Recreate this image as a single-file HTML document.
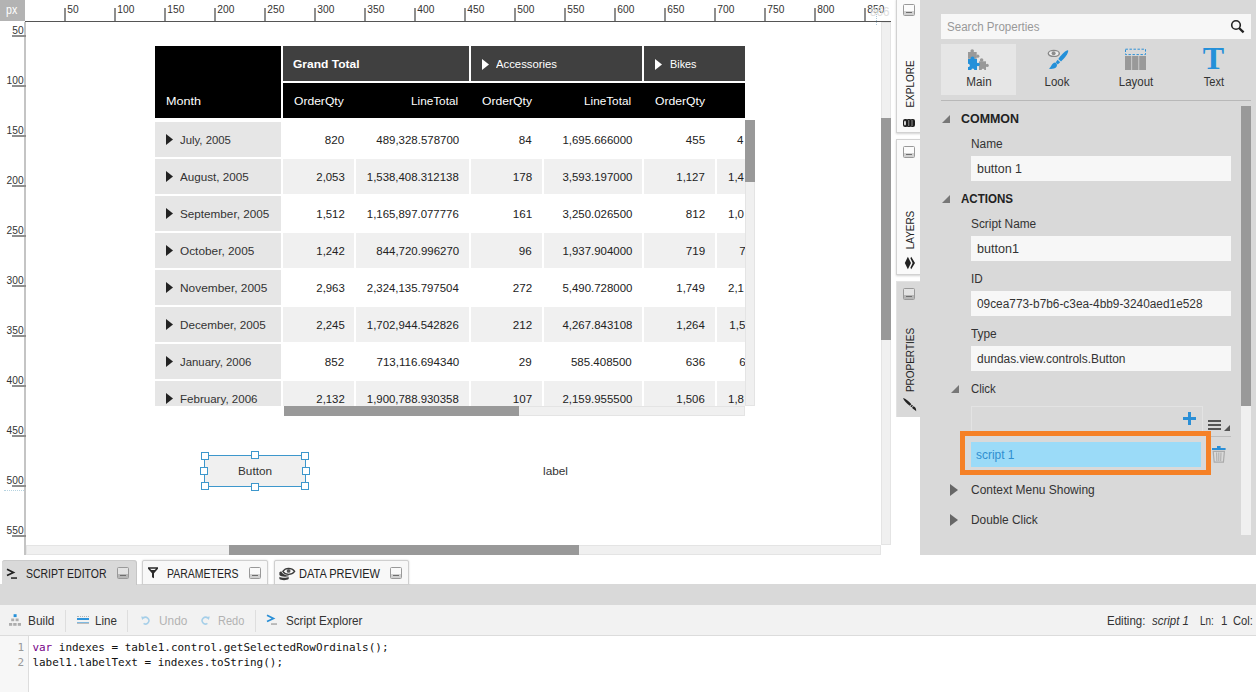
<!DOCTYPE html>
<html lang="en"><head><meta charset="utf-8"><title>Script Editor</title>
<style>
html,body{margin:0;padding:0;}
body{width:1256px;height:692px;overflow:hidden;background:#fff;position:relative;font-family:"Liberation Sans",sans-serif;}
body div,body svg{position:absolute;}
.t{white-space:nowrap;}
</style></head><body>
<div style="left:0px;top:0px;width:25px;height:21px;background:#b3b3b3;"></div>
<div class="t" style="top:1.6px;height:16px;line-height:16px;font-size:12px;color:#fff;left:6.1px;transform:scaleX(0.8828);transform-origin:left center;">px</div>
<div style="left:25px;top:21px;width:866px;height:1px;background:#555;"></div>
<div style="left:24px;top:22px;width:2px;height:533px;background:#c4c4c4;"></div>
<div style="left:64px;top:8px;width:2px;height:13px;background:#8e8e8e;"></div>
<div class="t" style="top:1.8px;height:16px;line-height:16px;font-size:10.2px;color:#333;left:67.3px;">50</div>
<div style="left:114px;top:8px;width:2px;height:13px;background:#8e8e8e;"></div>
<div class="t" style="top:1.8px;height:16px;line-height:16px;font-size:10.2px;color:#333;left:117.3px;">100</div>
<div style="left:164px;top:8px;width:2px;height:13px;background:#8e8e8e;"></div>
<div class="t" style="top:1.8px;height:16px;line-height:16px;font-size:10.2px;color:#333;left:167.3px;">150</div>
<div style="left:214px;top:8px;width:2px;height:13px;background:#8e8e8e;"></div>
<div class="t" style="top:1.8px;height:16px;line-height:16px;font-size:10.2px;color:#333;left:217.3px;">200</div>
<div style="left:264px;top:8px;width:2px;height:13px;background:#8e8e8e;"></div>
<div class="t" style="top:1.8px;height:16px;line-height:16px;font-size:10.2px;color:#333;left:267.3px;">250</div>
<div style="left:314px;top:8px;width:2px;height:13px;background:#8e8e8e;"></div>
<div class="t" style="top:1.8px;height:16px;line-height:16px;font-size:10.2px;color:#333;left:317.3px;">300</div>
<div style="left:364px;top:8px;width:2px;height:13px;background:#8e8e8e;"></div>
<div class="t" style="top:1.8px;height:16px;line-height:16px;font-size:10.2px;color:#333;left:367.3px;">350</div>
<div style="left:414px;top:8px;width:2px;height:13px;background:#8e8e8e;"></div>
<div class="t" style="top:1.8px;height:16px;line-height:16px;font-size:10.2px;color:#333;left:417.3px;">400</div>
<div style="left:464px;top:8px;width:2px;height:13px;background:#8e8e8e;"></div>
<div class="t" style="top:1.8px;height:16px;line-height:16px;font-size:10.2px;color:#333;left:467.3px;">450</div>
<div style="left:514px;top:8px;width:2px;height:13px;background:#8e8e8e;"></div>
<div class="t" style="top:1.8px;height:16px;line-height:16px;font-size:10.2px;color:#333;left:517.3px;">500</div>
<div style="left:564px;top:8px;width:2px;height:13px;background:#8e8e8e;"></div>
<div class="t" style="top:1.8px;height:16px;line-height:16px;font-size:10.2px;color:#333;left:567.3px;">550</div>
<div style="left:614px;top:8px;width:2px;height:13px;background:#8e8e8e;"></div>
<div class="t" style="top:1.8px;height:16px;line-height:16px;font-size:10.2px;color:#333;left:617.3px;">600</div>
<div style="left:664px;top:8px;width:2px;height:13px;background:#8e8e8e;"></div>
<div class="t" style="top:1.8px;height:16px;line-height:16px;font-size:10.2px;color:#333;left:667.3px;">650</div>
<div style="left:714px;top:8px;width:2px;height:13px;background:#8e8e8e;"></div>
<div class="t" style="top:1.8px;height:16px;line-height:16px;font-size:10.2px;color:#333;left:717.3px;">700</div>
<div style="left:764px;top:8px;width:2px;height:13px;background:#8e8e8e;"></div>
<div class="t" style="top:1.8px;height:16px;line-height:16px;font-size:10.2px;color:#333;left:767.3px;">750</div>
<div style="left:814px;top:8px;width:2px;height:13px;background:#8e8e8e;"></div>
<div class="t" style="top:1.8px;height:16px;line-height:16px;font-size:10.2px;color:#333;left:817.3px;">800</div>
<div style="left:864px;top:8px;width:2px;height:13px;background:#8e8e8e;"></div>
<div class="t" style="top:1.8px;height:16px;line-height:16px;font-size:10.2px;color:#333;left:867.3px;">850</div>
<div style="left:12px;top:35px;width:13.5px;height:2px;background:#8e8e8e;"></div>
<div class="t" style="top:22.6px;height:16px;line-height:16px;font-size:10.2px;color:#333;right:1232.4px;text-align:right;">50</div>
<div style="left:12px;top:85px;width:13.5px;height:2px;background:#8e8e8e;"></div>
<div class="t" style="top:72.6px;height:16px;line-height:16px;font-size:10.2px;color:#333;right:1232.4px;text-align:right;">100</div>
<div style="left:12px;top:135px;width:13.5px;height:2px;background:#8e8e8e;"></div>
<div class="t" style="top:122.6px;height:16px;line-height:16px;font-size:10.2px;color:#333;right:1232.4px;text-align:right;">150</div>
<div style="left:12px;top:185px;width:13.5px;height:2px;background:#8e8e8e;"></div>
<div class="t" style="top:172.6px;height:16px;line-height:16px;font-size:10.2px;color:#333;right:1232.4px;text-align:right;">200</div>
<div style="left:12px;top:235px;width:13.5px;height:2px;background:#8e8e8e;"></div>
<div class="t" style="top:222.6px;height:16px;line-height:16px;font-size:10.2px;color:#333;right:1232.4px;text-align:right;">250</div>
<div style="left:12px;top:285px;width:13.5px;height:2px;background:#8e8e8e;"></div>
<div class="t" style="top:272.6px;height:16px;line-height:16px;font-size:10.2px;color:#333;right:1232.4px;text-align:right;">300</div>
<div style="left:12px;top:335px;width:13.5px;height:2px;background:#8e8e8e;"></div>
<div class="t" style="top:322.6px;height:16px;line-height:16px;font-size:10.2px;color:#333;right:1232.4px;text-align:right;">350</div>
<div style="left:12px;top:385px;width:13.5px;height:2px;background:#8e8e8e;"></div>
<div class="t" style="top:372.6px;height:16px;line-height:16px;font-size:10.2px;color:#333;right:1232.4px;text-align:right;">400</div>
<div style="left:12px;top:435px;width:13.5px;height:2px;background:#8e8e8e;"></div>
<div class="t" style="top:422.6px;height:16px;line-height:16px;font-size:10.2px;color:#333;right:1232.4px;text-align:right;">450</div>
<div style="left:12px;top:485px;width:13.5px;height:2px;background:#8e8e8e;"></div>
<div class="t" style="top:472.6px;height:16px;line-height:16px;font-size:10.2px;color:#333;right:1232.4px;text-align:right;">500</div>
<div style="left:12px;top:535px;width:13.5px;height:2px;background:#8e8e8e;"></div>
<div class="t" style="top:522.6px;height:16px;line-height:16px;font-size:10.2px;color:#333;right:1232.4px;text-align:right;">550</div>
<div style="left:4px;top:490px;width:20px;height:0;border-top:1px dotted #b5d3e0;"></div>
<div style="left:876px;top:12px;width:0;height:13px;border-left:1px dotted #a9c6d8;"></div>
<div class="t" style="top:4.4px;height:16px;line-height:16px;font-size:12px;color:#dedede;left:870.3px;transform:scaleX(0.9685);transform-origin:left center;">866</div>
<div style="left:155px;top:46px;width:590px;height:360px;overflow:hidden;">
<div style="left:0px;top:0px;width:126px;height:72px;background:#000;"></div>
<div style="left:128px;top:0px;width:186px;height:35px;background:#404040;"></div>
<div style="left:316px;top:0px;width:171px;height:35px;background:#404040;"></div>
<div style="left:489px;top:0px;width:110px;height:35px;background:#404040;"></div>
<div style="left:128px;top:37px;width:470px;height:35px;background:#000;"></div>
<div style="left:0px;top:76px;width:126px;height:35px;background:#e6e6e6;"></div>
<div style="left:0px;top:113px;width:126px;height:35px;background:#e6e6e6;"></div>
<div style="left:128px;top:113px;width:71px;height:35px;background:#f0f0f0;"></div>
<div style="left:201px;top:113px;width:113px;height:35px;background:#f0f0f0;"></div>
<div style="left:316px;top:113px;width:71px;height:35px;background:#f0f0f0;"></div>
<div style="left:389px;top:113px;width:98px;height:35px;background:#f0f0f0;"></div>
<div style="left:489px;top:113px;width:71px;height:35px;background:#f0f0f0;"></div>
<div style="left:562px;top:113px;width:60px;height:35px;background:#f0f0f0;"></div>
<div style="left:0px;top:150px;width:126px;height:35px;background:#e6e6e6;"></div>
<div style="left:0px;top:187px;width:126px;height:35px;background:#e6e6e6;"></div>
<div style="left:128px;top:187px;width:71px;height:35px;background:#f0f0f0;"></div>
<div style="left:201px;top:187px;width:113px;height:35px;background:#f0f0f0;"></div>
<div style="left:316px;top:187px;width:71px;height:35px;background:#f0f0f0;"></div>
<div style="left:389px;top:187px;width:98px;height:35px;background:#f0f0f0;"></div>
<div style="left:489px;top:187px;width:71px;height:35px;background:#f0f0f0;"></div>
<div style="left:562px;top:187px;width:60px;height:35px;background:#f0f0f0;"></div>
<div style="left:0px;top:224px;width:126px;height:35px;background:#e6e6e6;"></div>
<div style="left:0px;top:261px;width:126px;height:35px;background:#e6e6e6;"></div>
<div style="left:128px;top:261px;width:71px;height:35px;background:#f0f0f0;"></div>
<div style="left:201px;top:261px;width:113px;height:35px;background:#f0f0f0;"></div>
<div style="left:316px;top:261px;width:71px;height:35px;background:#f0f0f0;"></div>
<div style="left:389px;top:261px;width:98px;height:35px;background:#f0f0f0;"></div>
<div style="left:489px;top:261px;width:71px;height:35px;background:#f0f0f0;"></div>
<div style="left:562px;top:261px;width:60px;height:35px;background:#f0f0f0;"></div>
<div style="left:0px;top:298px;width:126px;height:35px;background:#e6e6e6;"></div>
<div style="left:0px;top:335px;width:126px;height:35px;background:#e6e6e6;"></div>
<div style="left:128px;top:335px;width:71px;height:35px;background:#f0f0f0;"></div>
<div style="left:201px;top:335px;width:113px;height:35px;background:#f0f0f0;"></div>
<div style="left:316px;top:335px;width:71px;height:35px;background:#f0f0f0;"></div>
<div style="left:389px;top:335px;width:98px;height:35px;background:#f0f0f0;"></div>
<div style="left:489px;top:335px;width:71px;height:35px;background:#f0f0f0;"></div>
<div style="left:562px;top:335px;width:60px;height:35px;background:#f0f0f0;"></div>
</div>
<div class="t" style="top:92.5px;height:16px;line-height:16px;font-size:11.5px;color:#fff;left:165.5px;transform:scaleX(1.0948);transform-origin:left center;">Month</div>
<div class="t" style="top:55.5px;height:16px;line-height:16px;font-size:11.5px;color:#fff;font-weight:bold;left:293px;transform:scaleX(1.0442);transform-origin:left center;">Grand Total</div>
<div class="t" style="top:55.5px;height:16px;line-height:16px;font-size:11.5px;color:#fff;left:496px;transform:scaleX(0.9839);transform-origin:left center;">Accessories</div>
<div class="t" style="top:55.5px;height:16px;line-height:16px;font-size:11.5px;color:#fff;left:669.5px;transform:scaleX(0.9422);transform-origin:left center;">Bikes</div>
<svg style="left:482px;top:58.5px" width="7" height="11" viewBox="0 0 7 11"><path d="M0 0L7 5.5L0 11Z" fill="#fff"/></svg>
<svg style="left:655px;top:58.5px" width="7" height="11" viewBox="0 0 7 11"><path d="M0 0L7 5.5L0 11Z" fill="#fff"/></svg>
<div class="t" style="top:92.5px;height:16px;line-height:16px;font-size:11.5px;color:#fff;left:294.3px;transform:scaleX(1.0508);transform-origin:left center;">OrderQty</div>
<div class="t" style="top:92.5px;height:16px;line-height:16px;font-size:11.5px;color:#fff;right:797.5px;text-align:right;transform:scaleX(1.0207);transform-origin:right center;">LineTotal</div>
<div class="t" style="top:92.5px;height:16px;line-height:16px;font-size:11.5px;color:#fff;left:482px;transform:scaleX(1.0572);transform-origin:left center;">OrderQty</div>
<div class="t" style="top:92.5px;height:16px;line-height:16px;font-size:11.5px;color:#fff;right:624.5px;text-align:right;transform:scaleX(1.0207);transform-origin:right center;">LineTotal</div>
<div class="t" style="top:92.5px;height:16px;line-height:16px;font-size:11.5px;color:#fff;left:655px;transform:scaleX(1.0572);transform-origin:left center;">OrderQty</div>
<div style="left:155px;top:122px;width:590px;height:284px;overflow:hidden;">
<svg style="left:11px;top:12px" width="7" height="11" viewBox="0 0 7 11"><path d="M0 0L7 5.5L0 11Z" fill="#222"/></svg>
<div class="t" style="top:10.0px;height:16px;line-height:16px;font-size:11.5px;color:#333;left:25.2px;transform:scaleX(0.9869);transform-origin:left center;">July, 2005</div>
<div class="t" style="top:10.0px;height:16px;line-height:16px;font-size:11.5px;color:#222;right:400.6px;text-align:right;transform:scaleX(1.0116);transform-origin:right center;">820</div>
<div class="t" style="top:10.0px;height:16px;line-height:16px;font-size:11.5px;color:#222;right:286px;text-align:right;transform:scaleX(0.9964);transform-origin:right center;">489,328.578700</div>
<div class="t" style="top:10.0px;height:16px;line-height:16px;font-size:11.5px;color:#222;right:213px;text-align:right;transform:scaleX(1.0112);transform-origin:right center;">84</div>
<div class="t" style="top:10.0px;height:16px;line-height:16px;font-size:11.5px;color:#222;right:113px;text-align:right;transform:scaleX(0.9935);transform-origin:right center;">1,695.666000</div>
<div class="t" style="top:10.0px;height:16px;line-height:16px;font-size:11.5px;color:#222;right:39.8px;text-align:right;transform:scaleX(1.0116);transform-origin:right center;">455</div>
<div class="t" style="top:10.0px;height:16px;line-height:16px;font-size:11.5px;color:#222;left:582px;">4</div>
<svg style="left:11px;top:49px" width="7" height="11" viewBox="0 0 7 11"><path d="M0 0L7 5.5L0 11Z" fill="#222"/></svg>
<div class="t" style="top:47.0px;height:16px;line-height:16px;font-size:11.5px;color:#333;left:25.2px;transform:scaleX(1.015);transform-origin:left center;">August, 2005</div>
<div class="t" style="top:47.0px;height:16px;line-height:16px;font-size:11.5px;color:#222;right:400.6px;text-align:right;transform:scaleX(0.9895);transform-origin:right center;">2,053</div>
<div class="t" style="top:47.0px;height:16px;line-height:16px;font-size:11.5px;color:#222;right:286px;text-align:right;transform:scaleX(0.9911);transform-origin:right center;">1,538,408.312138</div>
<div class="t" style="top:47.0px;height:16px;line-height:16px;font-size:11.5px;color:#222;right:213px;text-align:right;transform:scaleX(1.0116);transform-origin:right center;">178</div>
<div class="t" style="top:47.0px;height:16px;line-height:16px;font-size:11.5px;color:#222;right:113px;text-align:right;transform:scaleX(0.9935);transform-origin:right center;">3,593.197000</div>
<div class="t" style="top:47.0px;height:16px;line-height:16px;font-size:11.5px;color:#222;right:39.8px;text-align:right;transform:scaleX(0.9895);transform-origin:right center;">1,127</div>
<div class="t" style="top:47.0px;height:16px;line-height:16px;font-size:11.5px;color:#222;left:573px;">1,4</div>
<svg style="left:11px;top:86px" width="7" height="11" viewBox="0 0 7 11"><path d="M0 0L7 5.5L0 11Z" fill="#222"/></svg>
<div class="t" style="top:84.0px;height:16px;line-height:16px;font-size:11.5px;color:#333;left:25.2px;transform:scaleX(1.0183);transform-origin:left center;">September, 2005</div>
<div class="t" style="top:84.0px;height:16px;line-height:16px;font-size:11.5px;color:#222;right:400.6px;text-align:right;transform:scaleX(0.9895);transform-origin:right center;">1,512</div>
<div class="t" style="top:84.0px;height:16px;line-height:16px;font-size:11.5px;color:#222;right:286px;text-align:right;transform:scaleX(0.9911);transform-origin:right center;">1,165,897.077776</div>
<div class="t" style="top:84.0px;height:16px;line-height:16px;font-size:11.5px;color:#222;right:213px;text-align:right;transform:scaleX(1.0116);transform-origin:right center;">161</div>
<div class="t" style="top:84.0px;height:16px;line-height:16px;font-size:11.5px;color:#222;right:113px;text-align:right;transform:scaleX(0.9935);transform-origin:right center;">3,250.026500</div>
<div class="t" style="top:84.0px;height:16px;line-height:16px;font-size:11.5px;color:#222;right:39.8px;text-align:right;transform:scaleX(1.0116);transform-origin:right center;">812</div>
<div class="t" style="top:84.0px;height:16px;line-height:16px;font-size:11.5px;color:#222;left:573px;">1,0</div>
<svg style="left:11px;top:123px" width="7" height="11" viewBox="0 0 7 11"><path d="M0 0L7 5.5L0 11Z" fill="#222"/></svg>
<div class="t" style="top:121.0px;height:16px;line-height:16px;font-size:11.5px;color:#333;left:25.2px;transform:scaleX(1.0284);transform-origin:left center;">October, 2005</div>
<div class="t" style="top:121.0px;height:16px;line-height:16px;font-size:11.5px;color:#222;right:400.6px;text-align:right;transform:scaleX(0.9895);transform-origin:right center;">1,242</div>
<div class="t" style="top:121.0px;height:16px;line-height:16px;font-size:11.5px;color:#222;right:286px;text-align:right;transform:scaleX(0.9964);transform-origin:right center;">844,720.996270</div>
<div class="t" style="top:121.0px;height:16px;line-height:16px;font-size:11.5px;color:#222;right:213px;text-align:right;transform:scaleX(1.0112);transform-origin:right center;">96</div>
<div class="t" style="top:121.0px;height:16px;line-height:16px;font-size:11.5px;color:#222;right:113px;text-align:right;transform:scaleX(0.9935);transform-origin:right center;">1,937.904000</div>
<div class="t" style="top:121.0px;height:16px;line-height:16px;font-size:11.5px;color:#222;right:39.8px;text-align:right;transform:scaleX(1.0116);transform-origin:right center;">719</div>
<div class="t" style="top:121.0px;height:16px;line-height:16px;font-size:11.5px;color:#222;left:584.3px;">7</div>
<svg style="left:11px;top:160px" width="7" height="11" viewBox="0 0 7 11"><path d="M0 0L7 5.5L0 11Z" fill="#222"/></svg>
<div class="t" style="top:158.0px;height:16px;line-height:16px;font-size:11.5px;color:#333;left:25.2px;transform:scaleX(1.0345);transform-origin:left center;">November, 2005</div>
<div class="t" style="top:158.0px;height:16px;line-height:16px;font-size:11.5px;color:#222;right:400.6px;text-align:right;transform:scaleX(0.9895);transform-origin:right center;">2,963</div>
<div class="t" style="top:158.0px;height:16px;line-height:16px;font-size:11.5px;color:#222;right:286px;text-align:right;transform:scaleX(0.9911);transform-origin:right center;">2,324,135.797504</div>
<div class="t" style="top:158.0px;height:16px;line-height:16px;font-size:11.5px;color:#222;right:213px;text-align:right;transform:scaleX(1.0116);transform-origin:right center;">272</div>
<div class="t" style="top:158.0px;height:16px;line-height:16px;font-size:11.5px;color:#222;right:113px;text-align:right;transform:scaleX(0.9935);transform-origin:right center;">5,490.728000</div>
<div class="t" style="top:158.0px;height:16px;line-height:16px;font-size:11.5px;color:#222;right:39.8px;text-align:right;transform:scaleX(0.9895);transform-origin:right center;">1,749</div>
<div class="t" style="top:158.0px;height:16px;line-height:16px;font-size:11.5px;color:#222;left:573px;">2,1</div>
<svg style="left:11px;top:197px" width="7" height="11" viewBox="0 0 7 11"><path d="M0 0L7 5.5L0 11Z" fill="#222"/></svg>
<div class="t" style="top:195.0px;height:16px;line-height:16px;font-size:11.5px;color:#333;left:25.2px;transform:scaleX(1.0167);transform-origin:left center;">December, 2005</div>
<div class="t" style="top:195.0px;height:16px;line-height:16px;font-size:11.5px;color:#222;right:400.6px;text-align:right;transform:scaleX(0.9895);transform-origin:right center;">2,245</div>
<div class="t" style="top:195.0px;height:16px;line-height:16px;font-size:11.5px;color:#222;right:286px;text-align:right;transform:scaleX(0.9911);transform-origin:right center;">1,702,944.542826</div>
<div class="t" style="top:195.0px;height:16px;line-height:16px;font-size:11.5px;color:#222;right:213px;text-align:right;transform:scaleX(1.0116);transform-origin:right center;">212</div>
<div class="t" style="top:195.0px;height:16px;line-height:16px;font-size:11.5px;color:#222;right:113px;text-align:right;transform:scaleX(0.9935);transform-origin:right center;">4,267.843108</div>
<div class="t" style="top:195.0px;height:16px;line-height:16px;font-size:11.5px;color:#222;right:39.8px;text-align:right;transform:scaleX(0.9895);transform-origin:right center;">1,264</div>
<div class="t" style="top:195.0px;height:16px;line-height:16px;font-size:11.5px;color:#222;left:574.3px;">1,5</div>
<svg style="left:11px;top:234px" width="7" height="11" viewBox="0 0 7 11"><path d="M0 0L7 5.5L0 11Z" fill="#222"/></svg>
<div class="t" style="top:232.0px;height:16px;line-height:16px;font-size:11.5px;color:#333;left:25.2px;transform:scaleX(0.991);transform-origin:left center;">January, 2006</div>
<div class="t" style="top:232.0px;height:16px;line-height:16px;font-size:11.5px;color:#222;right:400.6px;text-align:right;transform:scaleX(1.0116);transform-origin:right center;">852</div>
<div class="t" style="top:232.0px;height:16px;line-height:16px;font-size:11.5px;color:#222;right:286px;text-align:right;transform:scaleX(1.0066);transform-origin:right center;">713,116.694340</div>
<div class="t" style="top:232.0px;height:16px;line-height:16px;font-size:11.5px;color:#222;right:213px;text-align:right;transform:scaleX(1.0112);transform-origin:right center;">29</div>
<div class="t" style="top:232.0px;height:16px;line-height:16px;font-size:11.5px;color:#222;right:113px;text-align:right;transform:scaleX(1.0011);transform-origin:right center;">585.408500</div>
<div class="t" style="top:232.0px;height:16px;line-height:16px;font-size:11.5px;color:#222;right:39.8px;text-align:right;transform:scaleX(1.0116);transform-origin:right center;">636</div>
<div class="t" style="top:232.0px;height:16px;line-height:16px;font-size:11.5px;color:#222;left:584.3px;">6</div>
<svg style="left:11px;top:271px" width="7" height="11" viewBox="0 0 7 11"><path d="M0 0L7 5.5L0 11Z" fill="#222"/></svg>
<div class="t" style="top:269.0px;height:16px;line-height:16px;font-size:11.5px;color:#333;left:25.2px;transform:scaleX(1.0047);transform-origin:left center;">February, 2006</div>
<div class="t" style="top:269.0px;height:16px;line-height:16px;font-size:11.5px;color:#222;right:400.6px;text-align:right;transform:scaleX(0.9895);transform-origin:right center;">2,132</div>
<div class="t" style="top:269.0px;height:16px;line-height:16px;font-size:11.5px;color:#222;right:286px;text-align:right;transform:scaleX(0.9911);transform-origin:right center;">1,900,788.930358</div>
<div class="t" style="top:269.0px;height:16px;line-height:16px;font-size:11.5px;color:#222;right:213px;text-align:right;transform:scaleX(1.0116);transform-origin:right center;">107</div>
<div class="t" style="top:269.0px;height:16px;line-height:16px;font-size:11.5px;color:#222;right:113px;text-align:right;transform:scaleX(0.9935);transform-origin:right center;">2,159.955500</div>
<div class="t" style="top:269.0px;height:16px;line-height:16px;font-size:11.5px;color:#222;right:39.8px;text-align:right;transform:scaleX(0.9895);transform-origin:right center;">1,506</div>
<div class="t" style="top:269.0px;height:16px;line-height:16px;font-size:11.5px;color:#222;left:573px;">1,8</div>
</div>
<div style="left:284px;top:406px;width:461px;height:10px;background:#f0f0f0;box-shadow:inset 0 0 0 1px #e4e4e4;"></div>
<div style="left:284px;top:406px;width:235px;height:10px;background:#999;"></div>
<div style="left:745px;top:120px;width:10px;height:286px;background:#f0f0f0;box-shadow:inset 0 0 0 1px #e4e4e4;"></div>
<div style="left:745px;top:120px;width:10px;height:62px;background:#999;"></div>
<div style="left:204px;top:455px;width:102px;height:32px;background:#f0f0f0;box-sizing:border-box;border:1px solid #3d97cc;"></div>
<div style="left:201px;top:452px;width:8px;height:8px;background:#fff;box-sizing:border-box;border:1px solid #3d97cc;"></div>
<div style="left:251px;top:451px;width:8px;height:8px;background:#fff;box-sizing:border-box;border:1px solid #3d97cc;"></div>
<div style="left:301px;top:452px;width:8px;height:8px;background:#fff;box-sizing:border-box;border:1px solid #3d97cc;"></div>
<div style="left:200px;top:467px;width:8px;height:8px;background:#fff;box-sizing:border-box;border:1px solid #3d97cc;"></div>
<div style="left:302px;top:467px;width:8px;height:8px;background:#fff;box-sizing:border-box;border:1px solid #3d97cc;"></div>
<div style="left:201px;top:482px;width:8px;height:8px;background:#fff;box-sizing:border-box;border:1px solid #3d97cc;"></div>
<div style="left:251px;top:483px;width:8px;height:8px;background:#fff;box-sizing:border-box;border:1px solid #3d97cc;"></div>
<div style="left:301px;top:482px;width:8px;height:8px;background:#fff;box-sizing:border-box;border:1px solid #3d97cc;"></div>
<div class="t" style="top:463.0px;height:16px;line-height:16px;font-size:11.5px;color:#333;left:105px;width:300px;text-align:center;transform:scaleX(1.0226);transform-origin:center center;"><span>Button</span></div>
<div class="t" style="top:462.5px;height:16px;line-height:16px;font-size:11.5px;color:#333;left:543px;transform:scaleX(1.0283);transform-origin:left center;">label</div>
<div style="left:881px;top:22px;width:10px;height:523px;background:#f0f0f0;box-shadow:inset 0 0 0 1px #e4e4e4;"></div>
<div style="left:881px;top:118px;width:10px;height:222px;background:#999;"></div>
<div style="left:26px;top:545px;width:855px;height:10px;background:#f0f0f0;box-shadow:inset 0 0 0 1px #e4e4e4;"></div>
<div style="left:229px;top:545px;width:350px;height:10px;background:#999;"></div>
<div style="left:896px;top:-1px;width:25px;height:134px;background:#fafafa;box-sizing:border-box;border:1px solid #d2d2d2;box-shadow:0 1px 2px rgba(0,0,0,.18);"></div>
<div style="left:903px;top:4px;width:10px;height:10px;border:1px solid #999;border-radius:1.5px;background:linear-gradient(rgba(255,255,255,.25) 0,rgba(255,255,255,.25) 60%,rgba(0,0,0,.16) 60%,rgba(0,0,0,.16) 100%);"><div style="left:2px;top:7px;width:6px;height:1px;background:#6e6e6e;"></div></div>
<div class="t" style="left:809.5px;top:75.80000000000001px;width:200px;height:16px;line-height:16px;text-align:center;font-size:11.5px;color:#222;transform:rotate(-90deg) scaleX(0.8688);"><span>EXPLORE</span></div>
<div style="left:896px;top:139px;width:25px;height:136px;background:#fafafa;box-sizing:border-box;border:1px solid #d2d2d2;box-shadow:0 1px 2px rgba(0,0,0,.18);"></div>
<div style="left:903px;top:146px;width:10px;height:10px;border:1px solid #999;border-radius:1.5px;background:linear-gradient(rgba(255,255,255,.25) 0,rgba(255,255,255,.25) 60%,rgba(0,0,0,.16) 60%,rgba(0,0,0,.16) 100%);"><div style="left:2px;top:7px;width:6px;height:1px;background:#6e6e6e;"></div></div>
<div class="t" style="left:809.5px;top:222.0px;width:200px;height:16px;line-height:16px;text-align:center;font-size:11.5px;color:#222;transform:rotate(-90deg) scaleX(0.8623);"><span>LAYERS</span></div>
<div style="left:896px;top:281px;width:25px;height:135.5px;background:#d9d9d9;box-shadow:inset 1px 1px 0 rgba(255,255,255,.25);"></div>
<div style="left:903px;top:288px;width:10px;height:10px;border:1px solid #999;border-radius:1.5px;background:linear-gradient(rgba(255,255,255,.25) 0,rgba(255,255,255,.25) 60%,rgba(0,0,0,.16) 60%,rgba(0,0,0,.16) 100%);"><div style="left:2px;top:7px;width:6px;height:1px;background:#6e6e6e;"></div></div>
<div class="t" style="left:809.5px;top:351.70000000000005px;width:200px;height:16px;line-height:16px;text-align:center;font-size:11.5px;color:#222;transform:rotate(-90deg) scaleX(0.8685);"><span>PROPERTIES</span></div>
<svg style="left:903px;top:119px" width="12" height="8" viewBox="0 0 12 8"><g fill="#1e1e1e"><rect x="0" y="0" width="4.4" height="8" rx="2"/><rect x="3.8" y="0" width="4.4" height="8" rx="2"/><rect x="7.6" y="0" width="4.4" height="8" rx="2"/><rect x="2" y="0.4" width="8" height="7.2"/></g><ellipse cx="2" cy="4" rx="0.9" ry="2.6" fill="#fafafa"/><rect x="5.4" y="1" width="0.8" height="6" fill="#aaa"/><rect x="8.6" y="1" width="0.8" height="6" fill="#aaa"/></svg>
<svg style="left:904px;top:256px" width="12" height="14" viewBox="0 0 12 14"><path d="M3.9 0.8L7 7L3.9 13.2L0.8 7Z" fill="#222"/><path d="M7.2 0.8L11 7L7.2 13.2L6.4 11.8L8.6 7L6.4 2.2Z" fill="#222"/></svg>
<svg style="left:902px;top:397px" width="15" height="15" viewBox="0 0 15 15"><path d="M1 1C3.6 1.6 6.8 4.2 9.4 7.2L7.8 8.8C4.8 6.4 1.8 3.6 1 1Z M8.4 9.3L9.9 7.8L11 8.8L9.5 10.3Z M10 10.7L11.5 9.2C13.4 9.6 14.3 12 14.2 14.2C12.8 12.6 11.2 12.4 10 10.7Z" fill="#222"/></svg>
<div style="left:920px;top:0px;width:336px;height:555px;background:#d9d9d9;"></div>
<div style="left:941px;top:14px;width:310px;height:25px;background:#f7f7f7;"></div>
<div class="t" style="top:18.5px;height:16px;line-height:16px;font-size:12px;color:#999;left:947px;transform:scaleX(0.9631);transform-origin:left center;">Search Properties</div>
<svg style="left:1229px;top:18px" width="18" height="18" viewBox="0 0 18 18"><circle cx="7" cy="7" r="4.3" fill="none" stroke="#222" stroke-width="1.6"/><path d="M10 10L14.6 14.4" stroke="#222" stroke-width="2.3"/></svg>
<div style="left:941px;top:44px;width:75px;height:51px;background:#e6e6e6;"></div>
<div class="t" style="top:73.5px;height:16px;line-height:16px;font-size:12px;color:#333;left:828.5px;width:300px;text-align:center;transform:scaleX(0.9725);transform-origin:center center;"><span>Main</span></div>
<div class="t" style="top:73.5px;height:16px;line-height:16px;font-size:12px;color:#333;left:907px;width:300px;text-align:center;transform:scaleX(0.9527);transform-origin:center center;"><span>Look</span></div>
<div class="t" style="top:73.5px;height:16px;line-height:16px;font-size:12px;color:#333;left:985.5px;width:300px;text-align:center;transform:scaleX(0.9547);transform-origin:center center;"><span>Layout</span></div>
<div class="t" style="top:73.5px;height:16px;line-height:16px;font-size:12px;color:#333;left:1063.8px;width:300px;text-align:center;transform:scaleX(0.9266);transform-origin:center center;"><span>Text</span></div>
<div style="left:941px;top:100px;width:310px;height:1px;background:#b8b8b8;"></div>
<svg style="left:967px;top:48px" width="23" height="23" viewBox="0 0 23 23">
<g fill="#999"><rect x="1" y="4" width="8.7" height="6.8"/><circle cx="5.2" cy="3" r="1.8"/><circle cx="10.8" cy="8.2" r="1.6"/>
<rect x="12" y="13.3" width="7" height="8.7"/><circle cx="14.6" cy="12" r="1.8"/><circle cx="20.2" cy="17.4" r="1.6"/></g>
<g fill="#2490d9"><rect x="1" y="11" width="9" height="11"/><circle cx="5.5" cy="10.6" r="2"/><circle cx="11" cy="16.5" r="1.8"/></g>
<circle cx="1.2" cy="17.4" r="1.6" fill="#e6e6e6"/><circle cx="5.8" cy="22" r="1.5" fill="#e6e6e6"/><circle cx="16" cy="22.2" r="1.4" fill="#e6e6e6"/>
</svg>
<svg style="left:1046px;top:48px" width="24" height="23" viewBox="0 0 24 23">
<ellipse cx="7.8" cy="5.4" rx="5.5" ry="3" fill="#eee" stroke="#888" stroke-width="1.4"/><circle cx="7.6" cy="5.2" r="2" fill="#8e8e8e"/>
<path d="M22 2.3C23 3.4 20.6 8.6 15 13.4L12.3 11C15.6 6 20.6 1.6 22 2.3Z" fill="#2490d9"/>
<path d="M11.6 11.8L14.2 14.2L11.6 16.4L9.8 14.2Z" fill="#2490d9"/>
<path d="M9.3 14.6C11 15.4 11.6 17.4 10.4 19C8.6 21 5.6 21 2.8 20.8C5.4 19.6 5.4 15 9.3 14.6Z" fill="#2490d9"/></svg>
<svg style="left:1124px;top:48px" width="23" height="23" viewBox="0 0 23 23">
<rect x="1.5" y="1.2" width="20" height="5.4" fill="none" stroke="#2b8fd6" stroke-width="1" stroke-dasharray="2.4 1.6"/>
<rect x="1" y="8" width="6.3" height="14" fill="#999"/><rect x="8.1" y="8" width="6.3" height="14" fill="#999"/><rect x="15.2" y="8" width="6.8" height="14" fill="#999"/></svg>
<div class="t" style="top:41.3px;height:34px;line-height:34px;font-size:32px;color:#2490d9;font-weight:bold;font-family:'Liberation Serif',serif;left:1063.5px;width:300px;text-align:center;"><span>T</span></div>
<div style="left:1241px;top:106px;width:10px;height:429px;background:#f0f0f0;"></div>
<div style="left:1241px;top:106px;width:10px;height:300px;background:#999;"></div>
<svg style="left:941.5px;top:115px" width="8" height="8" viewBox="0 0 8 8"><path d="M8 0V8H0Z" fill="#777"/></svg>
<div class="t" style="top:110.5px;height:16px;line-height:16px;font-size:12px;color:#222;font-weight:bold;left:961px;transform:scaleX(1.0357);transform-origin:left center;">COMMON</div>
<div class="t" style="top:135.5px;height:16px;line-height:16px;font-size:12px;color:#333;left:970.8px;transform:scaleX(0.9901);transform-origin:left center;">Name</div>
<div style="left:971px;top:156px;width:260px;height:25px;background:#f7f7f7;"></div>
<div class="t" style="top:161.0px;height:16px;line-height:16px;font-size:12px;color:#333;left:977px;transform:scaleX(1.0375);transform-origin:left center;">button 1</div>
<svg style="left:941.5px;top:195px" width="8" height="8" viewBox="0 0 8 8"><path d="M8 0V8H0Z" fill="#777"/></svg>
<div class="t" style="top:190.5px;height:16px;line-height:16px;font-size:12px;color:#222;font-weight:bold;left:961px;transform:scaleX(0.963);transform-origin:left center;">ACTIONS</div>
<div class="t" style="top:215.5px;height:16px;line-height:16px;font-size:12px;color:#333;left:970.8px;transform:scaleX(0.9874);transform-origin:left center;">Script Name</div>
<div style="left:971px;top:236px;width:260px;height:25px;background:#f7f7f7;"></div>
<div class="t" style="top:241.0px;height:16px;line-height:16px;font-size:12px;color:#333;left:977px;transform:scaleX(1.0488);transform-origin:left center;">button1</div>
<div class="t" style="top:270.5px;height:16px;line-height:16px;font-size:12px;color:#333;left:970.8px;transform:scaleX(0.975);transform-origin:left center;">ID</div>
<div style="left:971px;top:291px;width:260px;height:25px;background:#f7f7f7;"></div>
<div class="t" style="top:296.0px;height:16px;line-height:16px;font-size:12px;color:#333;left:977px;transform:scaleX(0.9882);transform-origin:left center;">09cea773-b7b6-c3ea-4bb9-3240aed1e528</div>
<div class="t" style="top:325.5px;height:16px;line-height:16px;font-size:12px;color:#333;left:970.8px;transform:scaleX(0.9879);transform-origin:left center;">Type</div>
<div style="left:971px;top:346px;width:260px;height:25px;background:#f7f7f7;"></div>
<div class="t" style="top:351.0px;height:16px;line-height:16px;font-size:12px;color:#333;left:977px;transform:scaleX(0.9937);transform-origin:left center;">dundas.view.controls.Button</div>
<svg style="left:951px;top:385px" width="8" height="8" viewBox="0 0 8 8"><path d="M8 0V8H0Z" fill="#777"/></svg>
<div class="t" style="top:380.5px;height:16px;line-height:16px;font-size:12px;color:#333;left:970.8px;transform:scaleX(0.95);transform-origin:left center;">Click</div>
<div style="left:971px;top:406px;width:232px;height:27px;box-shadow:inset 0 0 0 1px #e3e3e3;"></div>
<div style="left:1183px;top:417px;width:13px;height:3px;background:#2b8fd6;"></div>
<div style="left:1188px;top:412px;width:3px;height:13px;background:#2b8fd6;"></div>
<div style="left:1208px;top:420px;width:13px;height:2px;background:#555;"></div>
<div style="left:1208px;top:424px;width:13px;height:2px;background:#555;"></div>
<div style="left:1208px;top:428px;width:13px;height:2px;background:#555;"></div>
<svg style="left:1224px;top:425px" width="6" height="6" viewBox="0 0 6 6"><path d="M6 0V6H0Z" fill="#555"/></svg>
<div style="left:1211px;top:436px;width:20px;height:1px;background:#bdbdbd;"></div>
<div style="left:971px;top:442px;width:230px;height:25px;background:#9bdbf8;"></div>
<div class="t" style="top:446.5px;height:16px;line-height:16px;font-size:12px;color:#2f8fd0;left:976px;transform:scaleX(0.9952);transform-origin:left center;">script 1</div>
<div style="left:960px;top:431px;width:251px;height:44px;box-sizing:border-box;border:5px solid #f58127;"></div>
<svg style="left:1211px;top:445px" width="16" height="18" viewBox="0 0 16 18">
<rect x="1" y="3" width="13.6" height="2" fill="#2b8fd6"/><rect x="6" y="1" width="3.6" height="2" fill="#2b8fd6"/>
<path d="M2.2 6.4H13.4L12.4 17.2H3.2Z" fill="none" stroke="#aaa" stroke-width="1.2"/>
<path d="M5.6 7.5L5.9 16M7.8 7.5V16M10 7.5L9.7 16" stroke="#aaa" stroke-width="1"/></svg>
<svg style="left:950px;top:484px" width="8" height="12" viewBox="0 0 8 12"><path d="M0 0L8 6L0 12Z" fill="#666"/></svg>
<div class="t" style="top:481.5px;height:16px;line-height:16px;font-size:12px;color:#333;left:970.8px;transform:scaleX(0.997);transform-origin:left center;">Context Menu Showing</div>
<svg style="left:950px;top:514px" width="8" height="12" viewBox="0 0 8 12"><path d="M0 0L8 6L0 12Z" fill="#666"/></svg>
<div class="t" style="top:511.5px;height:16px;line-height:16px;font-size:12px;color:#333;left:970.8px;transform:scaleX(0.9902);transform-origin:left center;">Double Click</div>
<div style="left:0px;top:584px;width:1256px;height:21px;background:#d9d9d9;"></div>
<div style="left:0px;top:605px;width:1256px;height:30px;background:#f2f2f2;"></div>
<div style="left:0px;top:635px;width:1256px;height:1px;background:#dcdcdc;"></div>
<div style="left:2px;top:560px;width:134px;height:25px;background:#d9d9d9;border-radius:3px 3px 0 0;box-shadow:1px 0 0 #c6c6c6, inset 0 1px 0 #cbcbcb;"></div>
<div style="left:142px;top:560px;width:126px;height:25px;background:#f8f8f8;box-sizing:border-box;border:1px solid #cfcfcf;box-shadow:0 0 2px rgba(0,0,0,.18);border-radius:2px 2px 0 0;"></div>
<div style="left:274px;top:560px;width:135px;height:25px;background:#f8f8f8;box-sizing:border-box;border:1px solid #cfcfcf;box-shadow:0 0 2px rgba(0,0,0,.18);border-radius:2px 2px 0 0;"></div>
<div style="left:136px;top:585px;width:1120px;height:3px;background:#d9d9d9;"></div>
<div style="left:117px;top:567px;width:10px;height:10px;border:1px solid #999;border-radius:1.5px;background:linear-gradient(rgba(255,255,255,.25) 0,rgba(255,255,255,.25) 60%,rgba(0,0,0,.16) 60%,rgba(0,0,0,.16) 100%);"><div style="left:2px;top:7px;width:6px;height:1px;background:#6e6e6e;"></div></div>
<div style="left:249px;top:567px;width:10px;height:10px;border:1px solid #999;border-radius:1.5px;background:linear-gradient(rgba(255,255,255,.25) 0,rgba(255,255,255,.25) 60%,rgba(0,0,0,.16) 60%,rgba(0,0,0,.16) 100%);"><div style="left:2px;top:7px;width:6px;height:1px;background:#6e6e6e;"></div></div>
<div style="left:390px;top:567px;width:10px;height:10px;border:1px solid #999;border-radius:1.5px;background:linear-gradient(rgba(255,255,255,.25) 0,rgba(255,255,255,.25) 60%,rgba(0,0,0,.16) 60%,rgba(0,0,0,.16) 100%);"><div style="left:2px;top:7px;width:6px;height:1px;background:#6e6e6e;"></div></div>
<div class="t" style="top:565.5px;height:16px;line-height:16px;font-size:12px;color:#222;left:26px;transform:scaleX(0.8726);transform-origin:left center;">SCRIPT EDITOR</div>
<div class="t" style="top:565.5px;height:16px;line-height:16px;font-size:12px;color:#222;left:167px;transform:scaleX(0.8741);transform-origin:left center;">PARAMETERS</div>
<div class="t" style="top:565.5px;height:16px;line-height:16px;font-size:12px;color:#222;left:299px;transform:scaleX(0.9178);transform-origin:left center;">DATA PREVIEW</div>
<svg style="left:6px;top:568px" width="12" height="12" viewBox="0 0 12 12"><path d="M1 1.2L7.5 4.4L1 7.6" fill="none" stroke="#222" stroke-width="1.7"/><rect x="5" y="9.3" width="6" height="1.5" fill="#222"/></svg>
<svg style="left:148px;top:567px" width="10" height="12" viewBox="0 0 10 12"><path d="M0 0.3H10V1.8L6 6.2V11.2L4 10.2V6.2L0 1.8Z" fill="#2a2a2a"/><path d="M2 1.7H8L6.6 3H3.4Z" fill="#f8f8f8"/></svg>
<svg style="left:278.5px;top:566.5px" width="17" height="14" viewBox="0 0 17 14">
<path d="M3.8 4.4C6.5 0.3 12.7 0.3 15.7 4.4C12.7 8.3 6.5 8.3 3.8 4.4Z" fill="#f8f8f8" stroke="#3a3a3a" stroke-width="1.25"/><circle cx="9.6" cy="3.9" r="1.9" fill="#555"/>
<path d="M0.4 5.2L2.2 4.3C3.2 7 6 8.4 9.7 8.6V9.3C6 10.2 1.4 9.6 0.4 8Z" fill="#3a3a3a"/>
<path d="M0.4 9.7C2 11 8 11.1 9.7 10V12C8 13.5 2 13.5 0.4 12Z" fill="#3a3a3a"/></svg>
<svg style="left:9px;top:614px" width="12" height="12" viewBox="0 0 12 12"><rect x="4.6" y="0.2" width="3" height="2.9" fill="#2490d9"/>
<g fill="#adadad"><rect x="2.2" y="4.5" width="3" height="2.7"/><rect x="6.6" y="4.5" width="3" height="2.7"/><rect x="0" y="9" width="3.2" height="2.8"/><rect x="4.2" y="9" width="3.4" height="2.8"/><rect x="8.8" y="9" width="3.2" height="2.8"/></g></svg>
<div class="t" style="top:613.0px;height:16px;line-height:16px;font-size:12px;color:#333;left:27.8px;transform:scaleX(0.9892);transform-origin:left center;">Build</div>
<div style="left:65px;top:610px;width:1px;height:22px;background:#dedede;"></div>
<div style="left:77px;top:616px;width:12px;height:0;border-top:1px dotted #b5b5b5;"></div>
<div style="left:77px;top:618px;width:12px;height:2px;background:#2f94da;"></div>
<div style="left:77px;top:621.5px;width:12px;height:1.2px;background:#7fb9e0;"></div>
<div style="left:77px;top:623px;width:12px;height:1px;background:#bdbdbd;"></div>
<div class="t" style="top:613.0px;height:16px;line-height:16px;font-size:12px;color:#333;left:95.3px;transform:scaleX(0.9653);transform-origin:left center;">Line</div>
<div style="left:127px;top:610px;width:1px;height:22px;background:#dedede;"></div>
<svg style="left:140.5px;top:615px" width="10" height="10" viewBox="0 0 10 10"><path d="M2.2 3.3A3.3 3.3 0 1 1 2.6 8.3" fill="none" stroke="#a6cfe9" stroke-width="1.5"/><path d="M0.2 1.4L4 2L1.2 4.9Z" fill="#a6cfe9"/></svg>
<div class="t" style="top:613.0px;height:16px;line-height:16px;font-size:12px;color:#b2b2b2;left:158.7px;transform:scaleX(0.9865);transform-origin:left center;">Undo</div>
<svg style="left:199.5px;top:615px" width="10" height="10" viewBox="0 0 10 10"><path d="M7.4 8.3A3.3 3.3 0 1 1 7.8 3.3" fill="none" stroke="#a6cfe9" stroke-width="1.5"/><path d="M9.8 1.4L6 2L8.8 4.9Z" fill="#a6cfe9"/></svg>
<div class="t" style="top:613.0px;height:16px;line-height:16px;font-size:12px;color:#b2b2b2;left:217.9px;transform:scaleX(0.9203);transform-origin:left center;">Redo</div>
<div style="left:255px;top:610px;width:1px;height:22px;background:#dedede;"></div>
<svg style="left:266px;top:614px" width="12" height="12" viewBox="0 0 12 12"><path d="M1 1.2L7.5 4.4L1 7.6" fill="none" stroke="#2b8fd6" stroke-width="1.7"/><rect x="5" y="9.3" width="6" height="1.5" fill="#aaa"/></svg>
<div class="t" style="top:613.0px;height:16px;line-height:16px;font-size:12px;color:#333;left:286px;transform:scaleX(0.972);transform-origin:left center;">Script Explorer</div>
<div class="t" style="top:613.0px;height:16px;line-height:16px;font-size:12px;color:#333;left:1106.6px;transform:scaleX(0.9593);transform-origin:left center;">Editing:</div>
<div class="t" style="top:613.0px;height:16px;line-height:16px;font-size:12px;color:#333;font-style:italic;left:1151.5px;transform:scaleX(0.9564);transform-origin:left center;">script 1</div>
<div class="t" style="top:613.0px;height:16px;line-height:16px;font-size:12px;color:#333;left:1199.8px;transform:scaleX(0.827);transform-origin:left center;">Ln:</div>
<div class="t" style="top:613.0px;height:16px;line-height:16px;font-size:12px;color:#333;left:1220.8px;transform:scaleX(0.957);transform-origin:left center;">1</div>
<div class="t" style="top:613.0px;height:16px;line-height:16px;font-size:12px;color:#333;left:1232.7px;transform:scaleX(0.9324);transform-origin:left center;">Col:</div>
<div style="left:0px;top:636px;width:28px;height:56px;background:#f7f7f7;border-right:1px solid #ddd;"></div>
<div class="t" style="top:639.5px;height:16px;line-height:16px;font-size:11px;color:#999;font-family:'DejaVu Sans Mono','Liberation Mono',monospace;right:1232px;text-align:right;">1</div>
<div class="t" style="top:654.5px;height:16px;line-height:16px;font-size:11px;color:#999;font-family:'DejaVu Sans Mono','Liberation Mono',monospace;right:1232px;text-align:right;">2</div>
<div class="t" style="left:32.4px;top:640px;height:15px;line-height:15px;font-size:10.96px;font-family:'DejaVu Sans Mono','Liberation Mono',monospace;color:#111;"><span style="color:#708">var</span> indexes = table1.control.getSelectedRowOrdinals();</div>
<div class="t" style="left:32.4px;top:655px;height:15px;line-height:15px;font-size:10.96px;font-family:'DejaVu Sans Mono','Liberation Mono',monospace;color:#111;">label1.labelText = indexes.toString();</div>
</body></html>
